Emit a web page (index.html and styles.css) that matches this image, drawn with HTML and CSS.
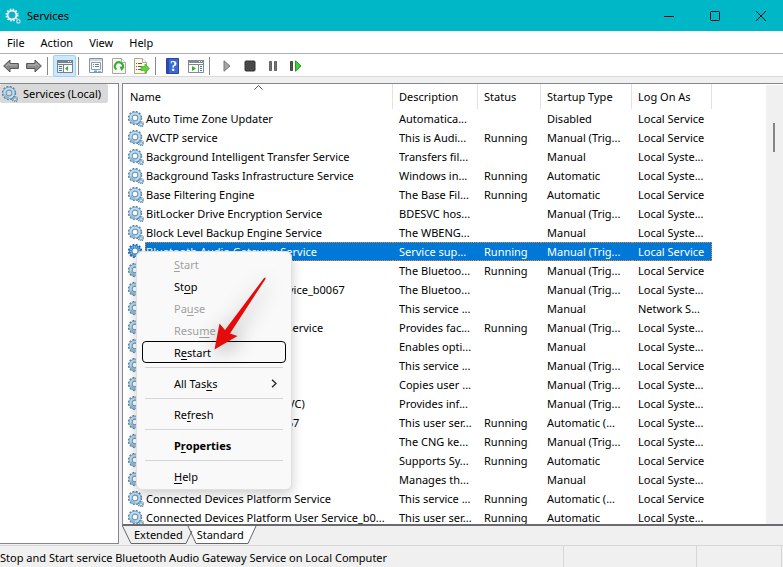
FILE: index.html
```html
<!DOCTYPE html>
<html lang="en">
<head>
<meta charset="utf-8">
<title>Services</title>
<link rel="stylesheet" href="styles.css">
</head>
<body>
<svg class="defs" aria-hidden="true">
  <symbol id="gear" viewBox="0 0 16 16">
    <circle cx="7" cy="7" r="6.200" fill="none" stroke="#587f9c" stroke-width="2" stroke-dasharray="1.800 1.450"/>
    <circle cx="7" cy="7" r="4.300" fill="none" stroke="#6f9ab8" stroke-width="4"/>
    <circle cx="7" cy="7" r="4.500" fill="none" stroke="#bcdcf1" stroke-width="2.200"/>
    <path d="M2.800 8.500a4.400 4.400 0 0 0 4.200 3" fill="none" stroke="#8fb9d6" stroke-width="1.600"/>
    <circle cx="13" cy="13.200" r="2.600" fill="none" stroke="#6389a5" stroke-width="1.400" stroke-dasharray="1.100 .940"/>
    <circle cx="13" cy="13.200" r="1.500" fill="#fff" stroke="#8db2ce" stroke-width="1.500"/>
  </symbol>
  <symbol id="gear-on" viewBox="0 0 16 16">
    <circle cx="7" cy="7" r="6.200" fill="none" stroke="#1c66a8" stroke-width="2" stroke-dasharray="1.800 1.450"/>
    <circle cx="7" cy="7" r="4.300" fill="none" stroke="#2c78bb" stroke-width="3.600"/>
    <circle cx="7" cy="7" r="4.200" fill="none" stroke="#9ccbed" stroke-width="2" stroke-dasharray="1 1"/>
  </symbol>
</svg>

<header class="titlebar">
  <svg class="app-icon" viewBox="0 0 16 16"><circle cx="7" cy="7" r="5.700" fill="none" stroke="#d2edf5" stroke-width="1.800" stroke-dasharray="1.600 1.380"/><circle cx="7" cy="7" r="4.300" fill="none" stroke="#e6f3fa" stroke-width="2"/><circle cx="7" cy="7" r="3.100" fill="none" stroke="#5b9ab4" stroke-width=".7"/><circle cx="13.400" cy="13.400" r="1.700" fill="none" stroke="#bddbe8" stroke-width="1.300"/></svg>
  <h1>Services</h1>
  <div class="window-buttons">
    <button aria-label="Minimize"><svg viewBox="0 0 12 12"><path d="M1 6.500h10"/></svg></button>
    <button aria-label="Maximize"><svg viewBox="0 0 12 12"><rect x="1.500" y="1.500" width="9" height="9" rx="1"/></svg></button>
    <button aria-label="Close"><svg viewBox="0 0 12 12"><path d="M1 1l10 10M11 1L1 11"/></svg></button>
  </div>
</header>

<nav class="menubar">
  <button>File</button><button>Action</button><button>View</button><button>Help</button>
</nav>

<div class="toolbar">
  <button aria-label="Back"><svg viewBox="0 0 16 16"><path d="M.6 8L7 2v3.500h8.400v5H7V14z" fill="#8c8c8c" stroke="#555"/><path d="M3 8l3-2.600V7h8" fill="none" stroke="#b5b5b5"/></svg></button>
  <button aria-label="Forward"><svg viewBox="0 0 16 16"><path d="M15.400 8L9 2v3.500H.6v5H9V14z" fill="#8c8c8c" stroke="#555"/><path d="M2 7h8V5.400L13 8" fill="none" stroke="#b5b5b5"/></svg></button>
  <i></i>
  <button class="pressed" aria-label="Show console tree"><svg viewBox="0 0 16 16"><path fill="#eef2f5" stroke="#75818b" d="M.5 2.500h15v12H.5z"/><path fill="#75818b" d="M0 2h16v3H0zM0 6h16v1H0zM6 7h1v8H6z"/><path fill="#fff" d="M11 3h1v1h-1zM13 3h1v1h-1zM7 7h8v7H7z"/><path fill="#4b7694" d="M2 8h3v1H2zM2 10h3v1H2zM2 12h3v1H2z"/><path fill="#35ae24" d="M11 8v5L8 10.500z"/></svg></button>
  <i></i>
  <button aria-label="Properties"><svg viewBox="0 0 16 16"><path d="M1.500.5h13v14h-13z" fill="#f6f7f8" stroke="#8b949d"/><path d="M2 2h12" stroke="#a9b3bb"/><path d="M3.500 4.500h9v7h-9z" fill="#fff" stroke="#8b9dab"/><path d="M5 6.500h1M7 6.500h4M5 8.500h1M7 8.500h4" stroke="#668197"/><path d="M6 13.500h3" stroke="#25b8f2" stroke-width="2"/><path d="M10 13.500h3" stroke="#a2abb3"/></svg></button>
  <button aria-label="Refresh"><svg viewBox="0 0 16 16"><path d="M1.500.5h9l4 4v11h-13z" fill="#f8f8f4" stroke="#aaa89f"/><path d="M10.500.5v4h4" fill="#fff" stroke="#aaa89f"/><path d="M5.500 11.500A4 4 0 1 1 11.500 10" fill="none" stroke="#32ad32" stroke-width="2"/><path d="M8.500 8.500l5 .5-3 4z" fill="#32ad32"/></svg></button>
  <button aria-label="Export List"><svg viewBox="0 0 16 16"><path d="M.5.5h8l4 4v11H.5z" fill="#fdf8d9" stroke="#aaa89f"/><path d="M8.500.5v4h4" fill="#fff" stroke="#aaa89f"/><path d="M2 5.500h1M4 5.500h4M2 8.500h1M4 8.500h4M2 11.500h1M4 11.500h4" stroke="#555d70"/><path d="M7 8.500h4V6l4.500 4.500L11 15v-2.500H7z" fill="#62d53a" stroke="#47a529" stroke-width=".7"/></svg></button>
  <i></i>
  <button class="help" aria-label="Help"><svg viewBox="0 0 16 16"><path d="M1.500.5h12v15h-12z" fill="#3d68d2" stroke="#2a479c"/><path d="M2 1h2v14H2z" fill="#2d4ba5"/><text x="8.500" y="13">?</text></svg></button>
  <button aria-label="Show action pane"><svg viewBox="0 0 16 16"><path fill="#fff" stroke="#7f8a93" d="M.5 2.500h15v12H.5z"/><path fill="#7f8a93" d="M0 2h16v3H0zM0 6h16v1H0zM10 7h1v8h-1z"/><path fill="#fff" d="M11 3h1v1h-1zM13 3h1v1h-1z"/><path fill="#4277a8" d="M12 8h2v1h-2zM12 10h2v1h-2zM12 12h2v1h-2z"/><path fill="#35ae24" d="M4 8v5l4-2.500z"/></svg></button>
  <i></i>
  <button aria-label="Start"><svg viewBox="0 0 16 16"><path d="M5 2.800v10.400L11 8z" fill="#a5a5a5" stroke="#777"/></svg></button>
  <button aria-label="Stop"><svg viewBox="0 0 16 16"><rect x="3" y="3" width="10" height="10" rx="1" fill="#484848" stroke="#333"/></svg></button>
  <button aria-label="Pause"><svg viewBox="0 0 16 16"><path d="M4.500 3.500h2v9h-2zM9.500 3.500h2v9h-2z" fill="#777" stroke="#606060"/></svg></button>
  <button aria-label="Restart"><svg viewBox="0 0 16 16"><path d="M2.500 3.500h2v9h-2z" fill="#555" stroke="#444"/><path d="M7.500 2.800v10.400L13 8z" fill="#3cd332" stroke="#21962a"/></svg></button>
</div>

<main class="workspace">
  <aside class="tree">
    <a href="#list"><svg class="gear"><use href="#gear"/></svg><span>Services (Local)</span></a>
  </aside>
  <section class="detail">
    <div class="list" id="list">
      <div class="rows">
        <table>
          <colgroup><col class="c-name"><col class="c-desc"><col class="c-status"><col class="c-start"><col class="c-logon"></colgroup>
          <thead><tr><th>Name<svg class="sort" viewBox="0 0 9 5"><path d="M.5 4.500l4-4 4 4"/></svg></th><th>Description</th><th>Status</th><th>Startup Type</th><th>Log On As</th></tr></thead>
          <tbody>
            <tr><td><svg class="gear"><use href="#gear"/></svg><span>Auto Time Zone Updater</span></td><td>Automatica...</td><td></td><td>Disabled</td><td>Local Service</td></tr>
            <tr><td><svg class="gear"><use href="#gear"/></svg><span>AVCTP service</span></td><td>This is Audi...</td><td>Running</td><td>Manual (Trig...</td><td>Local Service</td></tr>
            <tr><td><svg class="gear"><use href="#gear"/></svg><span>Background Intelligent Transfer Service</span></td><td>Transfers fil...</td><td></td><td>Manual</td><td>Local Syste...</td></tr>
            <tr><td><svg class="gear"><use href="#gear"/></svg><span>Background Tasks Infrastructure Service</span></td><td>Windows in...</td><td>Running</td><td>Automatic</td><td>Local Syste...</td></tr>
            <tr><td><svg class="gear"><use href="#gear"/></svg><span>Base Filtering Engine</span></td><td>The Base Fil...</td><td>Running</td><td>Automatic</td><td>Local Service</td></tr>
            <tr><td><svg class="gear"><use href="#gear"/></svg><span>BitLocker Drive Encryption Service</span></td><td>BDESVC hos...</td><td></td><td>Manual (Trig...</td><td>Local Syste...</td></tr>
            <tr><td><svg class="gear"><use href="#gear"/></svg><span>Block Level Backup Engine Service</span></td><td>The WBENG...</td><td></td><td>Manual</td><td>Local Syste...</td></tr>
            <tr class="selected"><td><svg class="gear"><use href="#gear-on"/></svg><span>Bluetooth Audio Gateway Service</span></td><td>Service sup...</td><td>Running</td><td>Manual (Trig...</td><td>Local Service</td></tr>
            <tr><td><svg class="gear"><use href="#gear"/></svg></td><td>The Bluetoo...</td><td>Running</td><td>Manual (Trig...</td><td>Local Service</td></tr>
            <tr><td><svg class="gear"><use href="#gear"/></svg><span>Bluetooth User Support Service_b0067</span></td><td>The Bluetoo...</td><td></td><td>Manual (Trig...</td><td>Local Syste...</td></tr>
            <tr><td><svg class="gear"><use href="#gear"/></svg></td><td>This service ...</td><td></td><td>Manual</td><td>Network S...</td></tr>
            <tr><td><svg class="gear"><use href="#gear"/></svg><span>Capability Access Manager Service</span></td><td>Provides fac...</td><td>Running</td><td>Manual (Trig...</td><td>Local Syste...</td></tr>
            <tr><td><svg class="gear"><use href="#gear"/></svg></td><td>Enables opti...</td><td></td><td>Manual</td><td>Local Syste...</td></tr>
            <tr><td><svg class="gear"><use href="#gear"/></svg></td><td>This service ...</td><td></td><td>Manual (Trig...</td><td>Local Service</td></tr>
            <tr><td><svg class="gear"><use href="#gear"/></svg></td><td>Copies user ...</td><td></td><td>Manual (Trig...</td><td>Local Syste...</td></tr>
            <tr><td><svg class="gear"><use href="#gear"/></svg><span>Client License Service (ClipSVC)</span></td><td>Provides inf...</td><td></td><td>Manual (Trig...</td><td>Local Syste...</td></tr>
            <tr><td><svg class="gear"><use href="#gear"/></svg><span>Clipboard User Service_b0067</span></td><td>This user ser...</td><td>Running</td><td>Automatic (...</td><td>Local Syste...</td></tr>
            <tr><td><svg class="gear"><use href="#gear"/></svg></td><td>The CNG ke...</td><td>Running</td><td>Manual (Trig...</td><td>Local Syste...</td></tr>
            <tr><td><svg class="gear"><use href="#gear"/></svg></td><td>Supports Sy...</td><td>Running</td><td>Automatic</td><td>Local Service</td></tr>
            <tr><td><svg class="gear"><use href="#gear"/></svg></td><td>Manages th...</td><td></td><td>Manual</td><td>Local Syste...</td></tr>
            <tr><td><svg class="gear"><use href="#gear"/></svg><span>Connected Devices Platform Service</span></td><td>This service ...</td><td>Running</td><td>Automatic (...</td><td>Local Service</td></tr>
            <tr><td><svg class="gear"><use href="#gear"/></svg><span>Connected Devices Platform User Service_b0...</span></td><td>This user ser...</td><td>Running</td><td>Automatic</td><td>Local Syste...</td></tr>
          </tbody>
        </table>
      </div>
      <div class="scrollbar"><div class="thumb"></div></div>
      <div class="context-menu" role="menu">
        <button role="menuitem" disabled><u>S</u>tart</button>
        <button role="menuitem">St<u>o</u>p</button>
        <button role="menuitem" disabled>Pa<u>u</u>se</button>
        <button role="menuitem" disabled>Resu<u>m</u>e</button>
        <button role="menuitem" class="focused">R<u>e</u>start</button>
        <hr>
        <button role="menuitem">All Tas<u>k</u>s<svg class="chevron" viewBox="0 0 6 9"><path d="M1 .7l4 3.800-4 3.800"/></svg></button>
        <hr>
        <button role="menuitem">Re<u>f</u>resh</button>
        <hr>
        <button role="menuitem" class="default">P<u>r</u>operties</button>
        <hr>
        <button role="menuitem"><u>H</u>elp</button>
      </div>
      <svg class="pointer" viewBox="0 0 60 80" aria-hidden="true"><path d="M61.500-2.500L60-2 21 50 15.500 43.500 10.500 69.500 33.500 56 26 53.500 61.500-1z" fill="#e30b0b"/></svg>
    </div>
    <div class="tabs">
      <svg viewBox="0 0 140 18" aria-hidden="true"><path d="M.5 0l9 17.500h54L70 0" fill="#f0f0f0"/><path d="M66 0l8 17.500h52L134 0z" fill="#fff"/><path d="M.5 0l8.500 17.500h55L70 5M66 0l8 17.500h52L134 0" fill="none" stroke="#666"/></svg>
      <button>Extended</button><button>Standard</button>
    </div>
  </section>
</main>

<footer class="statusbar"><span>Stop and Start service Bluetooth Audio Gateway Service on Local Computer</span><span></span><span></span></footer>
</body>
</html>
```
FILE: styles.css
```css
* { box-sizing: border-box; }

body {
  margin: 0;
  height: 100vh;
  display: flex;
  flex-direction: column;
  overflow: hidden;
  background: #f0f0f0;
  color: #000;
  font: 11px/19px "Noto Sans", "Open Sans", sans-serif;
}

button {
  margin: 0;
  padding: 0;
  border: 0;
  background: none;
  color: inherit;
  font: inherit;
}

svg { display: block; flex: none; }
.defs { position: absolute; width: 0; height: 0; }
.gear { width: 16px; height: 16px; }

.titlebar {
  flex: none;
  height: 31px;
  display: flex;
  align-items: center;
  padding-left: 5px;
  background: #00b7c7;
}
.app-icon { width: 16px; height: 16px; }
.titlebar h1 { flex: 1; margin: 0 0 0 6px; font-size: 11px; font-weight: 400; }
.window-buttons { display: flex; margin-right: -1px; }
.window-buttons button {
  width: 46px;
  height: 31px;
  display: grid;
  place-items: center;
}
.window-buttons svg { width: 12px; height: 12px; fill: none; stroke: #111; }

.menubar {
  flex: none;
  height: 23px;
  display: flex;
  gap: 16px;
  padding-left: 7px;
  background: #fff;
  border-bottom: 1px solid #adb0b8;
  line-height: 21px;
}

.toolbar {
  flex: none;
  height: 23px;
  display: flex;
  margin-left: -1px;
  background: #fff;
  border-bottom: 1px solid #d9d9d9;
}
.toolbar button {
  width: 23px;
  height: 22px;
  margin-top: 1px;
  display: grid;
  place-items: center;
}
.toolbar svg { width: 16px; height: 16px; }
.toolbar i { width: 1px; height: 18px; margin: 3px 5px 0 2px; background: #888; }
.toolbar .pressed { background: #cce8ff; border: 1px solid #99d1ff; border-radius: 2px; }
.help text { font: bold 14px "Liberation Serif", serif; fill: #fff; text-anchor: middle; }

.workspace {
  flex: 1;
  min-height: 0;
  display: flex;
  gap: 3px;
  padding-top: 6px;
}
.tree {
  width: 119px;
  margin-bottom: 1px;
  background: #fff;
  border: 1px solid #828790;
  border-left: 0;
}
.tree a {
  display: flex;
  align-items: center;
  gap: 5px;
  width: 108px;
  height: 19px;
  padding-left: 2px;
  background: #d9d9d9;
  border-radius: 2px;
  color: inherit;
  text-decoration: none;
  white-space: nowrap;
}

.detail { flex: 1; min-width: 0; display: flex; flex-direction: column; }
.list {
  position: relative;
  flex: 1;
  min-height: 0;
  display: flex;
  background: #fff;
  border: 1px solid #828790;
  border-bottom: 2px solid #696b70;
  border-right: 0;
}
.rows { flex: 1; min-width: 0; overflow: hidden; }
table { width: 589px; table-layout: fixed; border-collapse: separate; border-spacing: 0; }
.c-name { width: 270px; }
.c-desc { width: 85px; }
.c-status { width: 63px; }
.c-start { width: 91px; }
.c-logon { width: 80px; }
th {
  position: relative;
  height: 25px;
  padding: 0 6px;
  border-right: 1px solid #e2e2e2;
  font-weight: 400;
  text-align: left;
  white-space: nowrap;
}
th:first-child { padding-left: 7px; }
.sort { position: absolute; top: 1px; left: 131px; width: 9px; height: 5px; fill: none; stroke: #555; }
td { height: 19px; padding: 0 0 0 6px; white-space: nowrap; overflow: hidden; }
td:first-child { display: flex; align-items: center; gap: 1px; padding-left: 5px; }
td span { flex: 1; height: 19px; padding-left: 1px; }
.selected td:not(:first-child), .selected span {
  background: #0078d7;
  border: 1px dotted #f08a28;
  border-width: 1px 0;
  color: #fff;
  line-height: 17px;
}
.selected span { border-left-width: 1px; padding-left: 0; }
.selected td:last-child { border-right-width: 1px; }

.scrollbar { width: 17px; padding: 38px 8px 0 7px; margin-top: 1px; background: #f0f0f0; }
.thumb { height: 29px; background: #858585; }

.context-menu {
  position: absolute;
  top: 167px;
  left: 13px;
  width: 156px;
  padding: 1px 5px 2px;
  background: #f9f9f9;
  border: 1px solid #e0e0e0;
  border-radius: 6px;
  box-shadow: 0 4px 12px rgba(0, 0, 0, .2);
}
.context-menu button {
  display: flex;
  align-items: center;
  width: 100%;
  height: 22px;
  padding: 0 8px 0 31px;
  border: 1px solid transparent;
  border-radius: 4px;
  white-space: pre;
}
.context-menu button:disabled { color: #a0a0a0; }
.context-menu .focused { border-color: #000; }
.context-menu .default { font-weight: 700; }
.context-menu u { text-underline-offset: 2px; }
.context-menu hr { height: 1px; margin: 4px 3px; border: 0; background: #d5d5d5; }
.chevron { width: 6px; height: 9px; margin-left: auto; fill: none; stroke: #222; stroke-width: 1.3; }
.pointer {
  position: absolute;
  top: 196px;
  left: 81px;
  width: 60px;
  height: 80px;
  overflow: visible;
  filter: drop-shadow(2px 4px 10px rgba(0, 0, 0, .35));
}

.tabs { position: relative; flex: none; height: 19px; display: flex; gap: 14px; padding-left: 12px; }
.tabs svg { position: absolute; top: 0; left: 0; width: 140px; height: 18px; }
.tabs button { position: relative; height: 18px; line-height: 18px; }

.statusbar {
  flex: none;
  height: 22px;
  display: flex;
  border-top: 1px solid #d7d7d7;
  line-height: 23px;
  white-space: nowrap;
}
.statusbar span { width: 133px; border-right: 1px solid #d7d7d7; }
.statusbar span:first-child { flex: 1; }
.statusbar span:last-child { width: 85px; margin-right: 1px; }
```
